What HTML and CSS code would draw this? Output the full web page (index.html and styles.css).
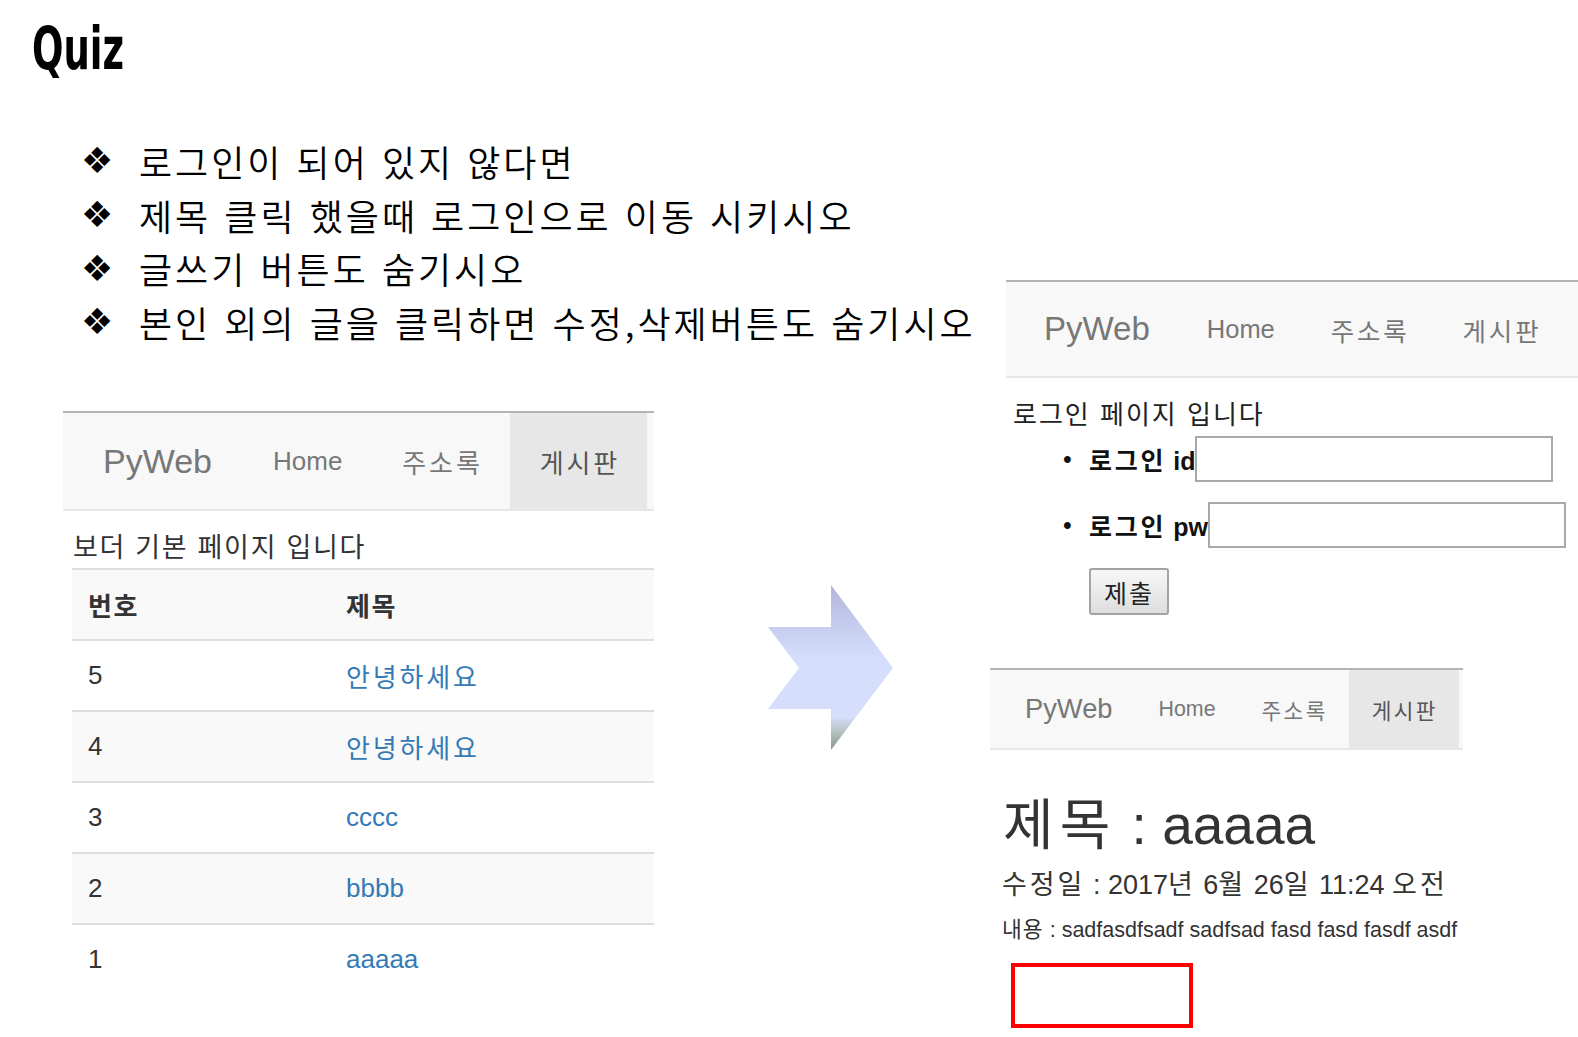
FILE: index.html
```html
<!DOCTYPE html>
<html lang="ko">
<head>
<meta charset="utf-8">
<title>Quiz</title>
<link rel="stylesheet" href="styles.css">
</head>
<body>
<div class="slide">
  <h1 class="title">Quiz</h1>
  <ul class="points">
    <li>로그인이 되어 있지 않다면</li>
    <li>제목 클릭 했을때 로그인으로 이동 시키시오</li>
    <li>글쓰기 버튼도 숨기시오</li>
    <li>본인 외의 글을 클릭하면 수정,삭제버튼도 숨기시오</li>
  </ul>

  <section class="shot shot-board">
    <nav class="nav">
      <span class="brand">PyWeb</span>
      <span class="link">Home</span>
      <span class="link ko">주소록</span>
      <span class="link ko active">게시판</span>
    </nav>
    <p class="caption">보더 기본 페이지 입니다</p>
    <table class="board">
      <thead>
        <tr><th class="col-no"><span class="ko-s">번호</span></th><th><span class="ko-s">제목</span></th></tr>
      </thead>
      <tbody>
        <tr><td>5</td><td><span class="a ko">안녕하세요</span></td></tr>
        <tr class="odd"><td>4</td><td><span class="a ko">안녕하세요</span></td></tr>
        <tr><td>3</td><td><span class="a">cccc</span></td></tr>
        <tr class="odd"><td>2</td><td><span class="a">bbbb</span></td></tr>
        <tr><td>1</td><td><span class="a">aaaaa</span></td></tr>
      </tbody>
    </table>
  </section>

  <svg class="arrow" width="140" height="175" viewBox="760 580 140 175">
    <defs>
      <linearGradient id="ag" x1="0" y1="585" x2="0" y2="750" gradientUnits="userSpaceOnUse">
        <stop offset="0" stop-color="#b2b6da"/>
        <stop offset="0.45" stop-color="#d5dffd"/>
        <stop offset="0.8" stop-color="#d5defa"/>
        <stop offset="0.88" stop-color="#b9c5c8"/>
        <stop offset="1" stop-color="#879886"/>
      </linearGradient>
    </defs>
    <polygon points="768,627 831,627 831,585 893,668 831,750 831,709 768,709 799,668" fill="url(#ag)"/>
  </svg>

  <section class="shot shot-login">
    <nav class="nav">
      <span class="brand">PyWeb</span>
      <span class="link">Home</span>
      <span class="link ko">주소록</span>
      <span class="link ko">게시판</span>
    </nav>
    <p class="caption">로그인 페이지 입니다</p>
    <ul class="form">
      <li><b><span class="ko">로그인</span> id</b><span class="input"></span></li>
      <li><b><span class="ko">로그인</span> pw</b><span class="input"></span></li>
    </ul>
    <span class="btn">제출</span>
  </section>

  <section class="shot shot-detail">
    <nav class="nav">
      <span class="brand">PyWeb</span>
      <span class="link">Home</span>
      <span class="link ko">주소록</span>
      <span class="link ko active">게시판</span>
    </nav>
    <h2 class="subject"><span class="ko">제목</span> : aaaaa</h2>
    <p class="date"><span class="ko">수정일</span> : 2017<span class="ko">년</span> 6<span class="ko">월</span> 26<span class="ko">일</span> 11:24 <span class="ko">오전</span></p>
    <p class="body"><span class="ko">내용</span> : sadfasdfsadf sadfsad fasd fasd fasdf asdf</p>
    <div class="mark"></div>
  </section>
</div>
</body>
</html>
```

FILE: styles.css
```css
html, body {
  margin: 0;
  padding: 0;
  background: #ffffff;
  overflow: hidden;
}

.slide {
  position: relative;
  width: 1578px;
  height: 1037px;
  padding-top: 20px;
  box-sizing: border-box;
  font-family: "Noto Sans CJK KR", sans-serif;
  color: #000;
}

.title {
  margin: 0 0 0 32px;
  height: 58px;
  font-family: "DejaVu Sans", sans-serif;
  font-stretch: condensed;
  font-weight: bold;
  font-size: 58px;
  line-height: 58px;
  transform: scaleX(0.71);
  transform-origin: left center;
  color: #000;
}

.points {
  list-style: none;
  margin: 56px 0 0 0;
  padding: 0 0 0 81px;
}

.points li {
  display: flex;
  align-items: center;
  height: 53.7px;
  font-family: "Noto Sans CJK KR", sans-serif;
  font-weight: 350;
  font-size: 36px;
  letter-spacing: 3px;
  white-space: nowrap;
  color: #000;
}

.points li::before {
  content: "\2756";
  font-family: "DejaVu Sans", sans-serif;
  font-weight: normal;
  font-size: 36px;
  letter-spacing: 0;
  width: 58px;
  flex: none;
}

/* screenshot panels */
.shot {
  position: absolute;
  font-family: "Liberation Sans", "Noto Sans CJK KR", sans-serif;
  color: #333;
}

.ko {
  letter-spacing: 0.11em;
}

.ko-s {
  letter-spacing: 0.06em;
}

.nav {
  display: flex;
  align-items: stretch;
  background: #f8f8f8;
  border-top: 2px solid #b4b4b4;
  border-bottom: 2px solid #e7e7e7;
  color: #777;
}

.nav .brand,
.nav .link {
  display: flex;
  align-items: center;
  white-space: nowrap;
}

.nav .active {
  background: #e7e7e7;
  color: #555;
}

/* board (left) */
.shot-board {
  left: 63px;
  top: 411px;
  width: 591px;
}

.shot-board .nav {
  height: 96px;
}

.shot-board .brand {
  font-size: 34px;
  padding: 0 31px 0 40px;
}

.shot-board .link {
  font-size: 26px;
  padding: 0 30px;
}

.shot-board .link.ko {
  padding: 0 27px 0 30px;
}

.shot-board .caption {
  margin: 19px 0 2px 10px;
  font-size: 27px;
  line-height: 36px;
  letter-spacing: 1.7px;
  color: #333;
}

.board {
  margin-left: 9px;
  width: 582px;
  border-collapse: collapse;
  font-size: 26px;
}

.board th,
.board td {
  text-align: left;
  padding: 0 16px;
  height: 69px;
  border-top: 2px solid #dedede;
  vertical-align: middle;
}

.board th {
  font-weight: bold;
  background: #f9f9f9;
  color: #333;
}

.board .col-no {
  width: 226px;
}

.board tr.odd td {
  background: #f9f9f9;
}

.board .a {
  color: #337ab7;
}

/* arrow */
.arrow {
  position: absolute;
  left: 760px;
  top: 580px;
}

/* login (top right) */
.shot-login {
  left: 1006px;
  top: 280px;
  width: 572px;
}

.shot-login .nav {
  height: 94px;
}

.shot-login .brand {
  font-size: 33px;
  padding: 0 29px 0 38px;
}

.shot-login .link {
  font-size: 25.5px;
  padding: 0 28px;
}

.shot-login .link.ko {
  padding: 0 25px 0 28px;
}

.shot-login .caption {
  margin: 21px 0 5px 7px;
  font-size: 26px;
  line-height: 32px;
  letter-spacing: 2px;
  color: #222;
}

.form {
  list-style: none;
  margin: 0;
  padding: 0 0 0 57px;
}

.form li {
  display: flex;
  align-items: center;
  height: 46px;
  margin-bottom: 20px;
  font-size: 25px;
  color: #111;
}

.form li::before {
  content: "\2022";
  width: 26px;
  flex: none;
  font-size: 25px;
}

.form b {
  white-space: nowrap;
}

.form .input {
  width: 354px;
  height: 42px;
  border: 2px solid #a9a9a9;
  background: #fff;
  flex: none;
}

.btn {
  display: flex;
  align-items: center;
  justify-content: center;
  margin-left: 83px;
  width: 76px;
  height: 43px;
  border: 2px solid #a3a3a3;
  border-radius: 3px;
  background: linear-gradient(#f7f7f7, #dedede);
  font-family: "Noto Sans CJK KR", sans-serif;
  font-size: 25px;
  letter-spacing: 2px;
  color: #222;
}

/* detail (bottom right) */
.shot-detail {
  left: 990px;
  top: 668px;
  width: 473px;
}

.shot-detail .nav {
  height: 78px;
}

.shot-detail .brand {
  font-size: 27.3px;
  padding: 0 23px 0 35px;
}

.shot-detail .link {
  font-size: 21.4px;
  padding: 0 23px;
}

.shot-detail .link.ko {
  padding: 0 21px 0 23px;
}

.subject {
  margin: 45px 0 0 13px;
  font-size: 55px;
  line-height: 60px;
  font-weight: normal;
  color: #333;
  white-space: nowrap;
}

.date {
  margin: 15px 0 0 12px;
  font-size: 27px;
  line-height: 30px;
  color: #333;
  white-space: nowrap;
}

.body {
  margin: 15px 0 0 12px;
  font-size: 21.5px;
  line-height: 31px;
  color: #333;
  white-space: nowrap;
}

.body .ko {
  letter-spacing: 0.05em;
}

.mark {
  margin: 17px 0 0 21px;
  width: 174px;
  height: 57px;
  border: 4px solid #ff0000;
}
```
